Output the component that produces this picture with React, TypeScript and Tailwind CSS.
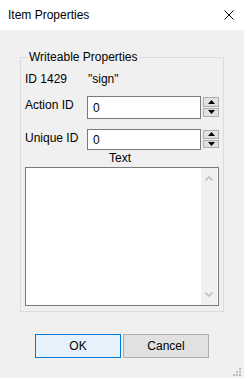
import React from 'react';

const Spinner: React.FC<{ h: string }> = ({ h }) => (
  <div className={`flex flex-col gap-[1px] ${h} w-[16px] ml-[2px]`}>
    <div className="flex-1 bg-[#e1e1e1] border border-[#adadad] flex items-center justify-center">
      <svg width="7" height="4" viewBox="0 0 7 4"><path d="M3.5 0L7 4H0Z" fill="#000" /></svg>
    </div>
    <div className="flex-1 bg-[#e1e1e1] border border-[#adadad] flex items-center justify-center">
      <svg width="7" height="4" viewBox="0 0 7 4"><path d="M0 0H7L3.5 4Z" fill="#000" /></svg>
    </div>
  </div>
);

const App: React.FC = () => {
  return (
    <div className="w-[244px] h-[378px] bg-[#f0f0f0] flex flex-col text-[12px] leading-[16px] text-black font-['Segoe_UI','Liberation_Sans',sans-serif] overflow-hidden relative">
      {/* title bar */}
      <div className="h-[30px] bg-white flex items-center justify-between pl-[8px] pr-[10px] shrink-0">
        <span>Item Properties</span>
        <svg width="10" height="10" viewBox="0 0 10 10">
          <path d="M0.5 0.5L9.5 9.5M9.5 0.5L0.5 9.5" stroke="#000" strokeWidth="1" />
        </svg>
      </div>

      {/* group box */}
      <div className="ml-[20px] mt-[27px] w-[204px] h-[255px] border border-[#dcdcdc] relative flex flex-col px-[4px] pt-[13px]">
        <span className="absolute -top-[9px] left-[7px] px-[1px] bg-[#f0f0f0]">Writeable Properties</span>

        <div className="flex">
          <span className="w-[63px]">ID 1429</span>
          <span>"sign"</span>
        </div>

        <div className="flex mt-[9px]">
          <span className="w-[62px] pt-[1px]">Action ID</span>
          <div className="w-[114px] h-[23px] bg-white border border-[#7a7a7a] flex items-center pl-[5px]">0</div>
          <div className="pt-[1px]"><Spinner h="h-[20px]" /></div>
        </div>

        <div className="flex mt-[10px]">
          <span className="w-[62px] pt-[1px]">Unique ID</span>
          <div className="w-[114px] h-[21px] bg-white border border-[#7a7a7a] flex items-center pl-[5px]">0</div>
          <div className="pt-[1px]"><Spinner h="h-[18px]" /></div>
        </div>

        <div className="text-center pr-[4px] h-[17px]">Text</div>

        <div className="w-[194px] h-[139px] bg-white border border-[#7a7a7a] flex justify-end">
          <div className="w-[16px] mr-[1px] bg-[#f0f0f0] flex flex-col items-center justify-between py-[8px]">
            <svg width="8" height="5" viewBox="0 0 8 5"><path d="M0.5 4.5L4 1L7.5 4.5" stroke="#c0c0c0" strokeWidth="1.6" fill="none" /></svg>
            <svg width="8" height="5" viewBox="0 0 8 5"><path d="M0.5 0.5L4 4L7.5 0.5" stroke="#c0c0c0" strokeWidth="1.6" fill="none" /></svg>
          </div>
        </div>
      </div>

      {/* buttons */}
      <div className="flex gap-[2px] ml-[35px] mt-[22px]">
        <button className="w-[86px] h-[24px] bg-[#e5f1fb] border border-[#0078d7]">OK</button>
        <button className="w-[86px] h-[24px] bg-[#e1e1e1] border border-[#adadad]">Cancel</button>
      </div>

      {/* size grip */}
      <svg className="absolute right-[3px] bottom-[2px]" width="9" height="9" viewBox="0 0 9 9">
        <rect x="7" y="1" width="2" height="2" fill="#bcbcbc" />
        <rect x="4" y="4" width="2" height="2" fill="#bcbcbc" />
        <rect x="7" y="4" width="2" height="2" fill="#bcbcbc" />
        <rect x="1" y="7" width="2" height="2" fill="#bcbcbc" />
        <rect x="4" y="7" width="2" height="2" fill="#bcbcbc" />
        <rect x="7" y="7" width="2" height="2" fill="#bcbcbc" />
      </svg>
    </div>
  );
};

export default App;
